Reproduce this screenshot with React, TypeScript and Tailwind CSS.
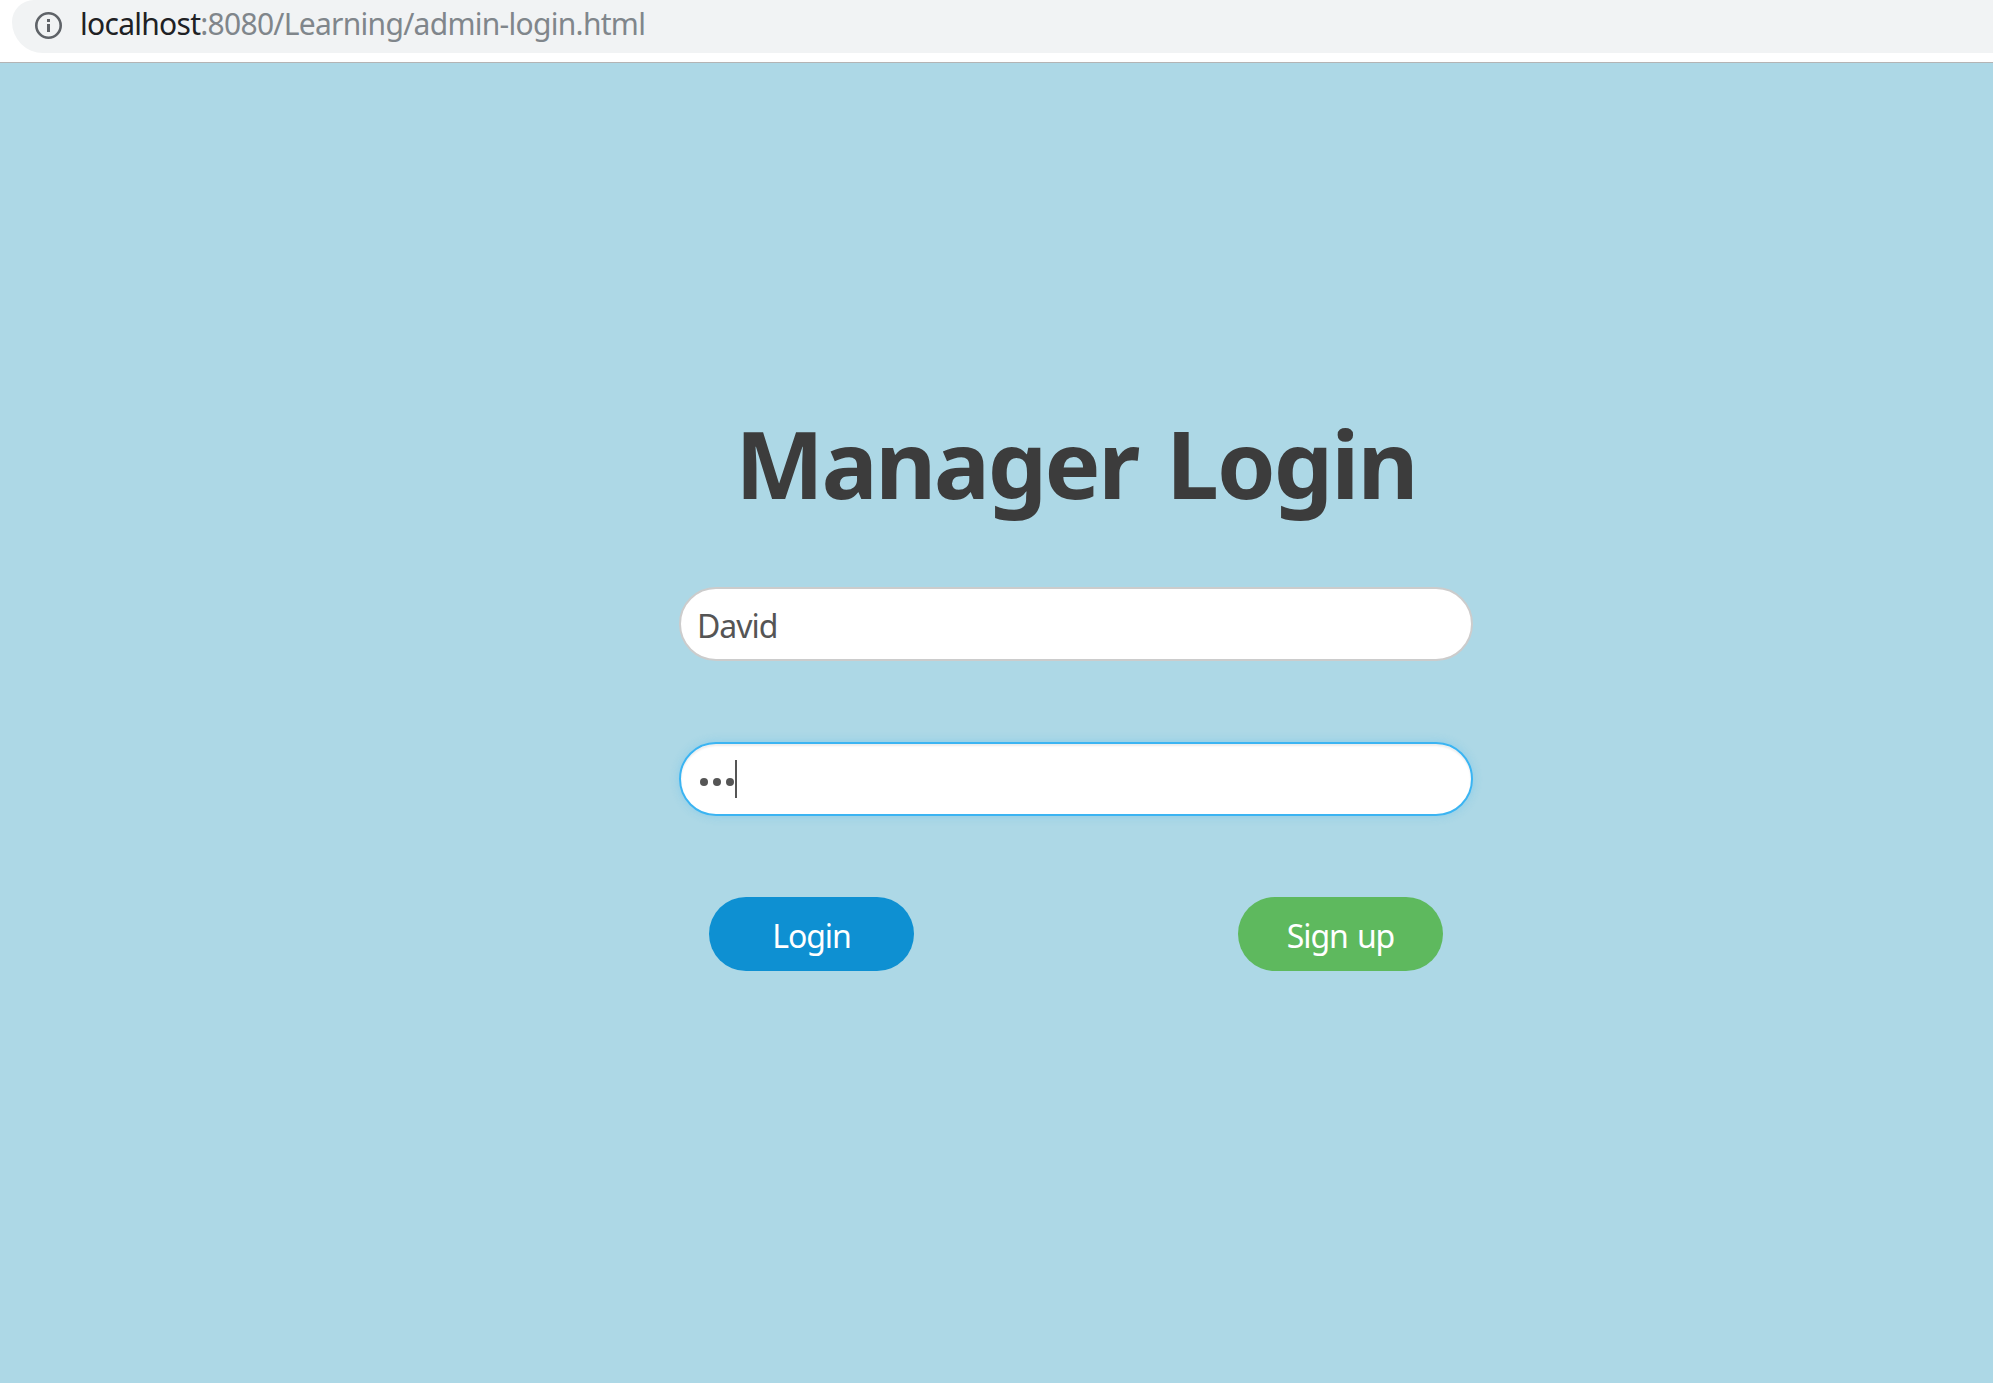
import React from "react";

function AddressBar() {
  return (
    <header className="h-[63px] border-b border-[#b4b4b4] bg-white pl-3">
      <div className="flex h-[53px] items-start rounded-bl-[34px] rounded-tl-[24px] bg-[#f1f3f4] pl-[23px]">
        <svg viewBox="0 0 27 27" className="mt-3 h-[27px] w-[27px] shrink-0" fill="none">
          <circle cx="13.5" cy="13.5" r="12.2" stroke="#5f6368" strokeWidth="2.6" />
          <path d="M12 7h3v3h-3zM12 12h3v8h-3z" fill="#5f6368" />
        </svg>
        <p className="ml-[18px] mt-1 whitespace-nowrap text-[30px] leading-[39px] tracking-[-0.72px] text-[#80868b]">
          <span className="text-[#202124]">localhost</span>:8080/Learning/admin-login.html
        </p>
      </div>
    </header>
  );
}

export default function App() {
  return (
    <div className="flex h-[1383px] w-[1993px] flex-col overflow-hidden bg-[#add8e6] font-['Noto_Sans',sans-serif]">
      <AddressBar />
      <main className="ml-[679px] flex w-[794px] flex-col pt-[350px]">
        <h1 className="h-[100px] whitespace-nowrap text-center text-[94px] font-bold leading-[100px] tracking-[-1.9px] text-[#3c3c3c] [word-spacing:6px]">
          <span className="tracking-[-2.5px]">Manager</span> Login
        </h1>
        <div className="mt-[74px] flex h-[74px] items-center rounded-full border-2 border-[#ccc] bg-white px-[16px] text-[32px] tracking-[-1px] text-[#555]">
          <span className="pt-[3px]">David</span>
        </div>
        <div className="mt-[81px] flex h-[74px] items-center rounded-full border-2 border-[#3bb4f2] bg-white px-[19px] shadow-[inset_0_2px_2px_rgba(0,0,0,0.075),0_0_10px_rgba(59,180,242,0.3)]">
          <div className="mt-[6px] flex gap-[5px]">
            <span className="size-2 rounded-full bg-[#555]" />
            <span className="size-2 rounded-full bg-[#555]" />
            <span className="size-2 rounded-full bg-[#555]" />
          </div>
          <span className="ml-px h-[38px] w-[2px] bg-[#555]" />
        </div>
        <div className="mt-[81px] flex justify-between px-[30px] text-[32px] tracking-[-1.1px] text-white">
          <button className="h-[74px] w-[205px] rounded-full bg-[#0e90d2] pt-[3px]">Login</button>
          <button className="h-[74px] w-[205px] rounded-full bg-[#5eb95e] pt-[3px] [word-spacing:2px]">Sign up</button>
        </div>
      </main>
    </div>
  );
}
